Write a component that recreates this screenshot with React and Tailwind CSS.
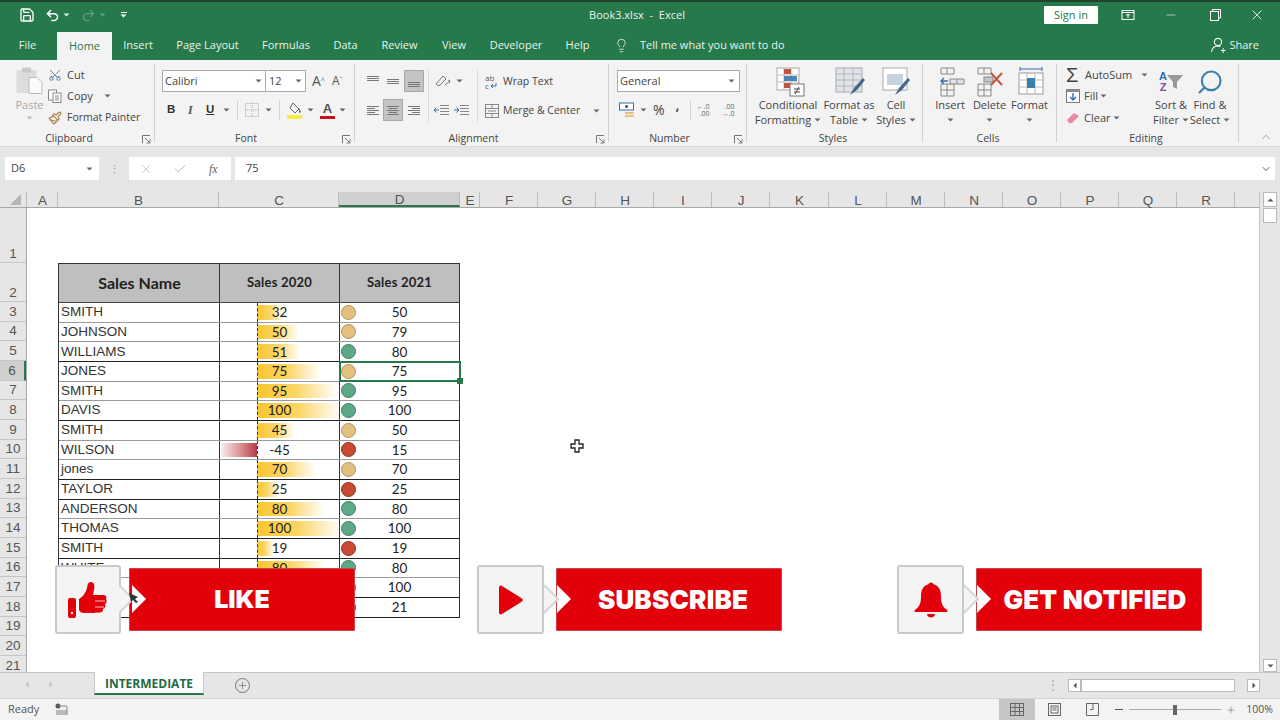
import React from 'react';
import { Save, Undo2, Redo2, Minus, X, Check, Lightbulb, Scissors, Paintbrush, Search, ChevronDown, ChevronUp, Plus } from 'lucide-react';

const ui = "font-['Open_Sans',sans-serif]";

const tabs = [
  { name: 'Insert', w: 'w-[28px]' },
  { name: 'Page Layout', w: 'w-[61px]' },
  { name: 'Formulas', w: 'w-[46px]' },
  { name: 'Data', w: 'w-[23px]' },
  { name: 'Review', w: 'w-[35px]' },
  { name: 'View', w: 'w-[24px]' },
  { name: 'Developer', w: 'w-[50px]' },
  { name: 'Help', w: 'w-[23px]' },
];

const columns = [
  { name: 'A', w: 'w-[31px]' },
  { name: 'B', w: 'w-[161px]' },
  { name: 'C', w: 'w-[120px]' },
  { name: 'D', w: 'w-[121px]', active: true },
  { name: 'E', w: 'w-[20px]' },
  { name: 'F', w: 'w-[58px]' },
  { name: 'G', w: 'w-[58px]' },
  { name: 'H', w: 'w-[58px]' },
  { name: 'I', w: 'w-[58px]' },
  { name: 'J', w: 'w-[58px]' },
  { name: 'K', w: 'w-[59px]' },
  { name: 'L', w: 'w-[58px]' },
  { name: 'M', w: 'w-[58px]' },
  { name: 'N', w: 'w-[58px]' },
  { name: 'O', w: 'w-[58px]' },
  { name: 'P', w: 'w-[58px]' },
  { name: 'Q', w: 'w-[58px]' },
  { name: 'R', w: 'w-[58px]' },
];

const amber = 'bg-[#e4c07f] border-[#b0935c]';
const green = 'bg-[#5da988] border-[#3c7d63]';
const red = 'bg-[#cb4a33] border-[#86301f]';

const rows = [
  { n: 3, name: 'SMITH', c: 32, d: 50, dot: amber, line: 'border-[#9a9a9a]' },
  { n: 4, name: 'JOHNSON', c: 50, d: 79, dot: amber, line: 'border-[#9a9a9a]' },
  { n: 5, name: 'WILLIAMS', c: 51, d: 80, dot: green, line: 'border-[#222]' },
  { n: 6, name: 'JONES', c: 75, d: 75, dot: amber, line: 'border-[#9a9a9a]', active: true },
  { n: 7, name: 'SMITH', c: 95, d: 95, dot: green, line: 'border-[#9a9a9a]' },
  { n: 8, name: 'DAVIS', c: 100, d: 100, dot: green, line: 'border-[#222]' },
  { n: 9, name: 'SMITH', c: 45, d: 50, dot: amber, line: 'border-[#9a9a9a]' },
  { n: 10, name: 'WILSON', c: -45, d: 15, dot: red, line: 'border-[#9a9a9a]' },
  { n: 11, name: 'jones', c: 70, d: 70, dot: amber, line: 'border-[#222]' },
  { n: 12, name: 'TAYLOR', c: 25, d: 25, dot: red, line: 'border-[#222]' },
  { n: 13, name: 'ANDERSON', c: 80, d: 80, dot: green, line: 'border-[#9a9a9a]' },
  { n: 14, name: 'THOMAS', c: 100, d: 100, dot: green, line: 'border-[#222]' },
  { n: 15, name: 'SMITH', c: 19, d: 19, dot: red, line: 'border-[#222]' },
  { n: 16, name: 'WHITE', c: 80, d: 80, dot: green, line: 'border-[#9a9a9a]' },
  { n: 17, name: 'MARTIN', c: 100, d: 100, dot: green, line: 'border-[#222]' },
  { n: 18, name: 'HARRIS', c: 21, d: 21, dot: red, line: 'border-[#222]' },
];

const Caret = ({ className = '' }) => (
  <svg width="7" height="4" viewBox="0 0 7 4" className={`shrink-0 ${className}`}><path d="M0.5 0.5h6L3.5 3.5z" fill="#666" /></svg>
);

const Launcher = () => (
  <svg width="9" height="9" viewBox="0 0 9 9" className="shrink-0" fill="none" stroke="#777" strokeWidth="1">
    <path d="M0.5 8V0.5H8M3 3l4.5 4.5M4.5 8H8V4.5" />
  </svg>
);

const Group = ({ w, label, launcher, children, labelClass = '' }) => (
  <div className={`${w} h-[78px] mt-[4px] border-r border-[#d0d0d0] flex flex-col shrink-0`}>
    <div className="h-[67px] shrink-0">{children}</div>
    <div className="flex items-center h-[16px] pr-[3px] shrink-0">
      <div className={`flex-1 text-center text-[10.5px] text-[#444] ${labelClass}`}>{label}</div>
      {launcher && <Launcher />}
    </div>
  </div>
);

const VDivider = ({ className = '' }) => <div className={`w-px h-[20px] bg-[#d4d4d4] shrink-0 ${className}`} />;

// three lines, used by all six alignment buttons
const AlignIcon = ({ lines, on }) => (
  <div className={`w-[20px] h-[22px] flex items-center justify-center shrink-0 ${on ? 'bg-[#c4c4c4] border border-[#a8a8a8]' : ''}`}>
    <svg width="14" height="14" viewBox="0 0 14 14" stroke="#777" strokeWidth="1">
      {lines.map((l, i) => <path key={i} d={`M${l[0]} ${l[2]}.5H${l[1]}`} />)}
    </svg>
  </div>
);

const GridIcon = ({ children }) => (
  <svg width="34" height="30" viewBox="0 0 34 30" fill="none">{children}</svg>
);

const BigButton = ({ w, icon, lines, caret = true }) => (
  <div className={`${w} flex flex-col items-center shrink-0`}>
    <div className="h-[29px] flex items-center justify-center">{icon}</div>
    <div className="text-[11px] leading-[15px] mt-[1px] text-[#444] text-center whitespace-nowrap">{lines[0]}</div>
    <div className="text-[11px] leading-[15px] text-[#444] flex items-center justify-center gap-[3px] h-[15px] whitespace-nowrap">
      {lines[1]}
      {caret && <Caret />}
    </div>
  </div>
);

const PromoBanner = ({ pos, boxW, gap, redPad, icon, text, textClass, arrowLeft, children }) => (
  <div className={`absolute z-20 ${pos} flex items-center h-[69px]`}>
    <div className={`${boxW} h-[69px] bg-[#f4f4f4] border-2 border-[#c9c9c9] rounded-[3px] flex items-center justify-center shrink-0`}>{icon}</div>
    <div className={`${gap} w-[226px] h-[63px] bg-[#e2000b] border border-[#c9444a] rounded-[1px] flex items-center justify-center shrink-0 ${redPad}`}>
      <span className={`font-['Inter',sans-serif] font-black text-white leading-none whitespace-nowrap ${textClass}`}>{text}</span>
    </div>
    <svg width="34" height="34" viewBox="0 0 34 34" className={`absolute top-[17px] ${arrowLeft}`}>
      <path d="M13 3L27 17L13 31z" fill="#fff" />
      <path d="M0 4L13 17L0 30z" fill="#f4f4f4" />
      <path d="M0 3L14 17L0 31" fill="none" stroke="#d6d6d6" strokeWidth="2" />
      {children}
    </svg>
  </div>
);

const DataBar = ({ value }) => {
  if (value < 0) {
    return (
      <div
        className="absolute left-[1px] top-[2px] bottom-[2px] bg-gradient-to-l from-[#b23a48] to-[#fbeff0]"
        style={{ width: Math.abs(value) * 0.8 }}
      />
    );
  }
  return (
    <div
      className="absolute left-[37px] top-[2px] bottom-[2px] bg-gradient-to-r from-[#fac52c] via-[#fbd562] to-[#fffdf4]"
      style={{ width: value * 0.82 }}
    />
  );
};

const App = () => {
  return (
    <div className={`relative w-[1280px] h-[720px] overflow-hidden flex flex-col bg-white ${ui}`}>
      {/* Title bar */}
      <div className="h-[2px] bg-[#20422f] shrink-0" />
      <div className="h-[28px] pb-[2px] bg-[#26794a] shrink-0 flex items-center text-white">
        <div className="w-[206px] flex items-center pl-[19px] shrink-0">
          <Save size={16} strokeWidth={2} />
          <Undo2 size={15} strokeWidth={2.4} className="ml-[10px]" />
          <svg width="7" height="4" viewBox="0 0 7 4" className="ml-[3px]"><path d="M0.5 0.5h6L3.5 3.5z" fill="#e5f0ea" /></svg>
          <Redo2 size={15} strokeWidth={2} className="ml-[11px] text-[#5f9f7c]" />
          <svg width="7" height="4" viewBox="0 0 7 4" className="ml-[3px]"><path d="M0.5 0.5h6L3.5 3.5z" fill="#5f9f7c" /></svg>
          <div className="ml-[14px] flex flex-col items-center gap-[1px]">
            <div className="w-[6px] h-px bg-white" />
            <svg width="7" height="4" viewBox="0 0 7 4"><path d="M0.5 0.5h6L3.5 3.5z" fill="#fff" /></svg>
          </div>
        </div>
        <div className="w-[862px] text-center text-[11px] text-[#eaf3ee] whitespace-pre">Book3.xlsx  -  Excel</div>
        <div className="w-[54px] h-[18px] ml-[-24px] bg-white rounded-[1px] text-[#26794a] text-[11px] flex items-center justify-center shrink-0">Sign in</div>
        <svg width="14" height="12" viewBox="0 0 14 12" fill="none" stroke="#fff" className="ml-[23px] shrink-0">
          <rect x="1" y="1.5" width="12" height="9" /><path d="M1 3.5h12M7 9V5M5.2 6.5L7 4.8l1.8 1.7" />
        </svg>
        <Minus size={14} strokeWidth={1} className="ml-[29px] shrink-0" />
        <svg width="11" height="12" viewBox="0 0 11 12" fill="none" stroke="#fff" className="ml-[32px] shrink-0">
          <rect x="0.5" y="2.5" width="8" height="9" /><path d="M2.5 2.5V0.5h8v8.5H8.5" />
        </svg>
        <X size={16} strokeWidth={1.3} className="ml-[28px] shrink-0" />
      </div>

      {/* Tabs */}
      <div className="h-[30px] bg-[#26794a] shrink-0 flex items-end text-[11px] text-[#e8f2ec]">
        <div className="w-[57px] h-[30px] flex items-center justify-center pr-[2px]">File</div>
        <div className="w-[55px] h-[28px] bg-[#f3f3f3] text-[#26794a] flex items-center justify-center">Home</div>
        <div className="flex items-center gap-[25px] h-[30px] ml-[12px]">
          {tabs.map((t) => (
            <div key={t.name} className={`${t.w} text-center whitespace-nowrap flex justify-center`}>{t.name}</div>
          ))}
        </div>
        <div className="h-[30px] flex items-center ml-[25px]">
          <Lightbulb size={15} strokeWidth={1.3} />
          <span className="ml-[11px] w-[140px] whitespace-nowrap">Tell me what you want to do</span>
        </div>
        <div className="h-[30px] flex items-center ml-auto mr-[21px] gap-[3px]">
          <svg width="16" height="16" viewBox="0 0 16 16" fill="none" stroke="#fff" strokeWidth="1.1">
            <circle cx="8" cy="5" r="3.6" /><path d="M1.5 15c.5-3.5 2.5-6 6.5-6 1 0 2 .2 2.6.6M11 13.5h4.500M13.200 11.200v4.600" />
          </svg>
          <span>Share</span>
        </div>
      </div>

      {/* Ribbon */}
      <div className="h-[87px] bg-[#f3f3f3] shrink-0 flex border-b border-[#d8d8d8] text-[#444]">
        <Group w="w-[155px]" label="Clipboard" launcher labelClass="pr-[4px]">
          <div className="flex h-full">
            <div className="w-[48px] pl-[11px] flex flex-col items-center shrink-0 text-[#a8a8a8] pt-[3px]">
              <svg width="28" height="28" viewBox="0 0 28 28">
                <rect x="0.5" y="3" width="20" height="23" rx="1" fill="#dcdcdc" />
                <rect x="6" y="0.5" width="9" height="5" fill="#c8c8c8" />
                <path d="M13 10.500h8l5 5v11H13z" fill="#fafafa" stroke="#bbb" />
              </svg>
              <div className="text-[11px] leading-[15px] mt-[2px]">Paste</div>
              <Caret className="mt-[4px] opacity-40" />
            </div>
            <div className="flex flex-col text-[11px]">
              <div className="h-[21.5px] flex items-center gap-[5px]"><Scissors size={14} strokeWidth={1.4} className="text-[#44678c] -rotate-90" /><span>Cut</span></div>
              <div className="h-[21.5px] flex items-center gap-[5px]">
                <svg width="14" height="14" viewBox="0 0 14 14" fill="#fff" stroke="#888"><rect x="0.5" y="1" width="8" height="10" /><rect x="5" y="4" width="8" height="9.500" /><path d="M7 7h4M7 9h4M7 11h4" /></svg>
                <span>Copy</span><Caret className="ml-[6px]" />
              </div>
              <div className="h-[21.5px] flex items-center gap-[5px]"><Paintbrush size={14} strokeWidth={2} className="text-[#a8824a]" /><span className="whitespace-nowrap text-[10.5px]">Format Painter</span></div>
            </div>
          </div>
        </Group>

        <Group w="w-[200px]" label="Font" launcher labelClass="pl-[1px] pr-[6px]">
          <div className="pl-[7px] pt-[6px]">
            <div className="flex items-center h-[22px]">
              <div className="w-[104px] h-[22px] bg-white border border-[#ababab] flex items-center justify-between pl-[2px] pr-[3px] text-[11px]"><span>Calibri</span><Caret /></div>
              <div className="w-[40px] h-[22px] bg-white border border-l-0 border-[#ababab] flex items-center justify-between pl-[3px] pr-[3px] text-[11px]"><span>12</span><Caret /></div>
              <span className="ml-[6px] text-[14px] leading-none text-[#555]">A<sup className="text-[7px] text-[#44678c]">^</sup></span>
              <span className="ml-[7px] text-[12px] leading-none text-[#555]">A<sup className="text-[7px] text-[#44678c]">ˇ</sup></span>
            </div>
            <div className="flex items-center h-[22px] mt-[7px] pl-[5px]">
              <span className="font-['Liberation_Sans',sans-serif] font-bold text-[11.5px] w-[12px] text-[#333]">B</span>
              <span className="font-['Liberation_Serif',serif] italic font-bold text-[12px] w-[12px] ml-[9px] text-[#555]">I</span>
              <span className="font-['Liberation_Sans',sans-serif] font-bold underline text-[11.5px] w-[10px] ml-[6px] text-[#333]">U</span>
              <Caret className="ml-[7px]" />
              <VDivider className="ml-[7px]" />
              <svg width="14" height="14" viewBox="0 0 14 14" fill="none" stroke="#aaa" strokeDasharray="1 1" className="ml-[7px]"><rect x="0.5" y="0.5" width="13" height="13" /><path d="M7 0v14M0 7h14" /></svg>
              <Caret className="ml-[6px]" />
              <VDivider className="ml-[7px]" />
              <svg width="16" height="17" viewBox="0 0 16 17" className="ml-[7px]"><path d="M6 1l6 6-4 4-5-5z" fill="#f5f5f5" stroke="#666" /><path d="M12 6l2 4-2 1z" fill="#666" /><rect x="0" y="13" width="15" height="4" fill="#f3ee3f" /></svg>
              <Caret className="ml-[4px]" />
              <div className="ml-[6px] w-[15px] h-[17px] flex flex-col items-center justify-end">
                <span className="font-['Liberation_Sans',sans-serif] text-[13px] leading-[12px] font-bold text-[#555]">A</span>
                <div className="w-[15px] h-[3px] mt-[1px] bg-[#c9101a]" />
              </div>
              <Caret className="ml-[4px]" />
            </div>
          </div>
        </Group>

        <Group w="w-[254px]" label="Alignment" launcher labelClass="pr-[4px]">
          <div className="flex pt-[6px] h-full">
            <div className="pl-[8px] w-[73px] shrink-0">
              <div className="flex h-[22px]">
                <AlignIcon lines={[[1, 13, 2], [1, 13, 4], [1, 13, 6]]} />
                <AlignIcon lines={[[1, 13, 5], [1, 13, 7], [1, 13, 9]]} />
                <div className="ml-[1px]"><AlignIcon on lines={[[1, 13, 8], [1, 13, 10], [1, 13, 12]]} /></div>
              </div>
              <div className="flex h-[22px] mt-[7px]">
                <AlignIcon lines={[[1, 13, 3], [1, 9, 5], [1, 13, 7], [1, 9, 9], [1, 13, 11]]} />
                <AlignIcon on lines={[[1, 13, 3], [3, 11, 5], [1, 13, 7], [3, 11, 9], [1, 13, 11]]} />
                <div className="ml-[1px]"><AlignIcon lines={[[1, 13, 3], [5, 13, 5], [1, 13, 7], [5, 13, 9], [1, 13, 11]]} /></div>
              </div>
            </div>
            <div className="w-[50px] border-x border-[#dcdcdc] h-[52px] shrink-0 pl-[5px]">
              <div className="flex items-center h-[22px] gap-[4px]">
                <svg width="18" height="14" viewBox="0 0 18 14" fill="none" stroke="#777"><path d="M2 10L9 2l3 3-7 7zM11 11l5-4M14 6l2 1-1 2" /></svg>
                <Caret />
              </div>
              <div className="flex items-center h-[22px] mt-[7px] gap-[5px]">
                <svg width="15" height="12" viewBox="0 0 15 12" fill="none" stroke="#888"><path d="M6 1.500h9M6 4.500h9M6 7.500h9M6 10.500h9" /><path d="M5 6H0M2.500 3.500L0 6l2.500 2.500" stroke="#2f6fb0" /></svg>
                <svg width="15" height="12" viewBox="0 0 15 12" fill="none" stroke="#888"><path d="M6 1.500h9M6 4.500h9M6 7.500h9M6 10.500h9" /><path d="M0 6h5M2.500 3.500L5 6 2.500 8.500" stroke="#2f6fb0" /></svg>
              </div>
            </div>
            <div className="pl-[7px] pt-px text-[11px] whitespace-nowrap">
              <div className="h-[22px] flex items-center gap-[4px]">
                <div className="w-[14px] flex flex-col shrink-0">
                  <span className="text-[8px] leading-[8px] text-[#555]">ab</span>
                  <div className="flex items-center gap-[1px]">
                    <span className="text-[8px] leading-[8px] text-[#555]">c</span>
                    <svg width="7" height="6" viewBox="0 0 7 6" fill="none" stroke="#2f6fb0"><path d="M6 0v3H1M3 1L1 3l2 2" /></svg>
                  </div>
                </div>
                <span className="text-[10.5px]">Wrap Text</span>
              </div>
              <div className="h-[22px] mt-[7px] flex items-center gap-[4px]">
                <svg width="14" height="14" viewBox="0 0 14 14" fill="none" stroke="#888"><rect x="0.5" y="0.5" width="13" height="13" /><path d="M0 4.500h14M0 9.500h14M3 7h8M7 0v4.500M7 9.500V14" /></svg>
                <span className="text-[10.5px]">Merge &amp; Center</span>
                <Caret className="ml-[9px]" />
              </div>
            </div>
          </div>
        </Group>

        <Group w="w-[138px]" label="Number" launcher labelClass="pr-[4px]">
          <div className="pl-[8px] pt-[6px]">
            <div className="w-[123px] h-[22px] bg-white border border-[#ababab] flex items-center justify-between pl-[2px] pr-[4px] text-[11px]"><span>General</span><Caret /></div>
            <div className="flex items-center h-[22px] mt-[7px] pl-[2px]">
              <svg width="16" height="16" viewBox="0 0 16 16"><rect x="0.5" y="1" width="14" height="7" fill="#fff" stroke="#2f6fb0" /><circle cx="7.500" cy="4.500" r="1.600" fill="#555" /><rect x="6" y="10" width="9" height="2" fill="#e6c17f" /><rect x="6" y="13" width="9" height="2" fill="#e6c17f" /></svg>
              <Caret className="ml-[5px]" />
              <span className="ml-[6px] text-[14px] leading-none">%</span>
              <span className="ml-[11px] text-[14px] leading-none font-bold text-[#555] -mt-[10px]">,</span>
              <VDivider className="ml-[10px]" />
              <span className="ml-[4px] text-[7px] leading-[7px] text-[#666] text-right w-[15px]">←.0<br />.00</span>
              <span className="ml-[10px] text-[7px] leading-[7px] text-[#666] text-right w-[15px]">.00<br />→.0</span>
            </div>
          </div>
        </Group>

        <Group w="w-[176px]" label="Styles">
          <div className="flex pt-[3px] pl-[2px]">
            <BigButton
              w="w-[78px]"
              lines={['Conditional', 'Formatting']}
              icon={
                <GridIcon>
                  <rect x="6" y="1" width="22" height="22" fill="#fff" stroke="#aaa" />
                  <path d="M6 8h22M6 15h22M13 1v22M20 1v22" stroke="#bbb" />
                  <rect x="13" y="2" width="7" height="5" fill="#c4553d" /><rect x="13" y="9" width="13" height="5" fill="#4d86b3" /><rect x="13" y="16" width="7" height="5" fill="#c4553d" />
                  <rect x="19" y="17" width="14" height="12" fill="#fff" stroke="#777" />
                  <path d="M23 22h6M23 25h6M28 20l-4 7" stroke="#444" />
                </GridIcon>
              }
            />
            <BigButton
              w="w-[44px]"
              lines={['Format as', 'Table']}
              icon={
                <GridIcon>
                  <rect x="4" y="1" width="26" height="24" fill="#dfe3ea" stroke="#aaa" />
                  <path d="M4 7h26M4 13h26M4 19h26M12 1v24M21 1v24" stroke="#b5b5b5" />
                  <path d="M18 28l4-7 9-10 2 2-8 10-7 5z" fill="#44678c" />
                </GridIcon>
              }
            />
            <BigButton
              w="w-[50px]"
              lines={['Cell', 'Styles']}
              icon={
                <GridIcon>
                  <rect x="4" y="1" width="24" height="22" fill="#fff" stroke="#aaa" />
                  <rect x="8" y="7" width="16" height="11" fill="#c5d3e0" />
                  <path d="M16 28l4-7 9-10 2 2-8 10-7 5z" fill="#44678c" />
                </GridIcon>
              }
            />
          </div>
        </Group>

        <Group w="w-[134px]" label="Cells">
          <div className="flex pt-[3px] pl-[7px]">
            <BigButton
              w="w-[40px]"
              lines={['Insert', '']}
              icon={
                <GridIcon>
                  <path d="M8 1h13v6H8zM14 1v6M8 17h13v12H8zM8 23h13M14 17v12" stroke="#888" />
                  <path d="M17 12h14v5H17zM24 12v5" stroke="#888" fill="#dfe3ea" />
                  <path d="M15 14H8M11 11l-3 3 3 3" stroke="#2f6fb0" strokeWidth="1.4" />
                </GridIcon>
              }
            />
            <BigButton
              w="w-[39px]"
              lines={['Delete', '']}
              icon={
                <GridIcon>
                  <path d="M5 1h13v6H5zM11 1v6M5 17h13v12H5zM5 23h13M11 17v12" stroke="#888" />
                  <rect x="11" y="10" width="9" height="5" fill="#bfc8d2" stroke="#888" />
                  <path d="M18 6l11 12M29 6L18 18" stroke="#c4553d" strokeWidth="2" />
                </GridIcon>
              }
            />
            <BigButton
              w="w-[41px]"
              lines={['Format', '']}
              icon={
                <GridIcon>
                  <rect x="6" y="6" width="24" height="21" fill="#fff" stroke="#999" />
                  <path d="M6 13h24M6 20h24M14 6v21M22 6v21" stroke="#bbb" />
                  <rect x="14" y="11" width="8" height="10" fill="#3b7fae" />
                  <path d="M7 2h22M7 0v4M29 0v4" stroke="#2f6fb0" />
                </GridIcon>
              }
            />
          </div>
        </Group>

        <Group w="w-[182px]" label="Editing">
          <div className="flex">
            <div className="pl-[9px] w-[94px] shrink-0 text-[11px] text-[#444]">
              <div className="h-[21.5px] flex items-center">
                <span className="w-[16px] text-[20px] leading-none font-['Liberation_Sans',sans-serif] text-[#444]">Σ</span>
                <span className="ml-[3px]">AutoSum</span>
                <Caret className="ml-[9px]" />
              </div>
              <div className="h-[21.5px] flex items-center">
                <svg width="14" height="14" viewBox="0 0 14 14" fill="none"><rect x="0.5" y="0.5" width="13" height="13" fill="#fff" stroke="#777" /><rect x="0" y="0" width="14" height="3" fill="#888" /><path d="M7 4v7M4 8l3 3 3-3" stroke="#2f6fb0" strokeWidth="1.4" /></svg>
                <span className="ml-[4px]">Fill</span>
                <Caret className="ml-[2px]" />
              </div>
              <div className="h-[21.5px] flex items-center">
                <svg width="14" height="12" viewBox="0 0 14 12"><path d="M1 8l7-7 5 3-7 7H3z" fill="#e68aa0" /></svg>
                <span className="ml-[4px]">Clear</span>
                <Caret className="ml-[2px]" />
              </div>
            </div>
            <div className="pt-[3px] flex">
              <BigButton
                w="w-[40px]"
                lines={['Sort &', 'Filter']}
                icon={
                  <div className="flex items-center">
                    <span className="font-['Liberation_Sans',sans-serif] font-bold text-[11px] leading-[11px] text-center"><span className="text-[#2f6fb0]">A</span><br /><span className="text-[#8a4aa8]">Z</span></span>
                    <svg width="16" height="14" viewBox="0 0 16 14" className="mt-[1px]"><path d="M0 0h16l-6 7v7l-4-2V7z" fill="#999" /></svg>
                  </div>
                }
              />
              <BigButton
                w="w-[38px]"
                lines={['Find &', 'Select']}
                icon={<Search size={28} strokeWidth={1.8} className="text-[#3b7fae] -scale-x-100" />}
              />
            </div>
          </div>
        </Group>

        <div className="flex-1 flex items-end justify-end pr-[7px] pb-[2px]">
          <ChevronUp size={14} strokeWidth={1} className="text-[#666]" />
        </div>
      </div>

      {/* Formula bar */}
      <div className="h-[45px] bg-[#e6e6e6] shrink-0 flex items-start pt-[10px] pl-[5px] pr-[5px]">
        <div className="w-[94px] h-[23px] bg-white flex items-center justify-between pl-[6px] pr-[6px] text-[11px] text-[#444] shrink-0"><span>D6</span><Caret /></div>
        <div className="w-[30px] h-[23px] flex items-center justify-center text-[#999] shrink-0 text-[11px] leading-none">⋮</div>
        <div className="w-[102px] h-[23px] bg-white flex items-center shrink-0">
          <X size={14} strokeWidth={1.2} className="ml-[10px] text-[#b5b5b5]" />
          <Check size={14} strokeWidth={1.6} className="ml-[20px] text-[#b5b5b5]" />
          <span className="ml-[22px] font-['Liberation_Serif',serif] italic text-[12px] text-[#666]">fx</span>
        </div>
        <div className="flex-1 h-[23px] ml-[4px] bg-white flex items-center justify-between pl-[11px] pr-[3px] text-[11px] text-[#444]">
          <span>75</span>
          <ChevronDown size={12} className="text-[#555]" />
        </div>
      </div>

      {/* Sheet */}
      <div className="flex flex-1 min-h-0 bg-white">
        <div className="w-[1260px] flex flex-col shrink-0 border-r border-[#c6c6c6]">
          {/* Column headers */}
          <div className="h-[16px] flex bg-[#e6e6e6] border-b border-[#a8a8a8] shrink-0 font-['Liberation_Sans',sans-serif] text-[13.5px] text-[#555]">
            <div className="w-[27px] h-full flex items-end justify-end pr-[5px] pb-[2px] border-r border-[#bdbdbd] shrink-0">
              <svg width="11" height="11" viewBox="0 0 11 11"><path d="M11 0v11H0z" fill="#b5b5b5" /></svg>
            </div>
            {columns.map((c) => (
              <div
                key={c.name}
                className={`${c.w} flex items-center justify-center pt-[3px] pl-px border-r border-[#bdbdbd] shrink-0 ${c.active ? 'bg-[#d0d0d0] border-b-2 border-b-[#26794a]' : ''}`}
              >
                {c.name}
              </div>
            ))}
          </div>

          <div className="flex flex-1 min-h-0">
            {/* Row headers */}
            <div className="w-[27px] bg-[#e6e6e6] border-r border-[#a8a8a8] shrink-0 font-['Liberation_Sans',sans-serif] text-[13.5px] text-[#555] flex flex-col overflow-hidden">
              <div className="h-[55px] border-b border-[#c6c6c6] flex items-end justify-center shrink-0 leading-[16px]">1</div>
              <div className="h-[39px] border-b border-[#c6c6c6] flex items-end justify-center shrink-0 leading-[16px]">2</div>
              {rows.map((r) => (
                <div key={r.n} className={`h-[19.67px] pt-px border-b border-[#c6c6c6] flex items-center justify-center shrink-0 ${r.active ? 'bg-[#d0d0d0] border-r-2 border-r-[#26794a]' : ''}`}>{r.n}</div>
              ))}
              {[19, 20, 21].map((n) => (
                <div key={n} className="h-[19.67px] pt-px border-b border-[#c6c6c6] flex items-center justify-center shrink-0">{n}</div>
              ))}
            </div>

            {/* Table */}
            <div className="flex-1 pl-[31px] pt-[55px]">
              <div className="w-[402px] border-l border-r border-t border-[#333]">
                <div className="h-[39px] flex bg-[#bfbfbf] border-b border-[#444] font-['Lato',sans-serif] font-bold text-[#222]">
                  <div className="w-[161px] border-r border-[#333] flex items-center justify-center text-[16px] pl-px">Sales Name</div>
                  <div className="w-[120px] border-r border-[#333] flex items-center justify-center text-[13px] tracking-[0.2px]">Sales 2020</div>
                  <div className="flex-1 flex items-center justify-center text-[13px] tracking-[0.2px]">Sales 2021</div>
                </div>
                {rows.map((r) => (
                  <div key={r.n} className={`h-[19.67px] flex border-b ${r.line} text-[#222]`}>
                    <div className="w-[161px] border-r border-[#333] pl-[2px] flex items-center font-['Liberation_Sans',sans-serif] text-[13.5px] text-[#333] shrink-0">{r.name}</div>
                    <div className="relative w-[120px] border-r border-[#333] flex items-center justify-center font-['Lato',sans-serif] text-[13.5px] shrink-0">
                      <DataBar value={r.c} />
                      <div className="absolute left-[37px] top-0 bottom-0 border-l border-dashed border-[#333]" />
                      <span className="relative">{r.c}</span>
                    </div>
                    <div className="relative flex-1 flex items-center pl-[1px] font-['Lato',sans-serif] text-[13.5px]">
                      <div className={`w-[15px] h-[15px] rounded-full border ${r.dot} shrink-0`} />
                      <span className="flex-1 text-center pr-[16px]">{r.d}</span>
                      {r.active && (
                        <div className="absolute z-10 -left-px -right-[2px] -top-[1px] -bottom-[1px] border-2 border-[#26794a]">
                          <div className="absolute -right-[4px] -bottom-[4px] w-[6px] h-[6px] bg-[#26794a]" />
                        </div>
                      )}
                    </div>
                  </div>
                ))}
              </div>
            </div>
          </div>
        </div>

        {/* Vertical scrollbar */}
        <div className="flex-1 bg-[#e6e6e6] flex flex-col items-center">
          <div className="w-[14px] h-[15px] bg-white border border-[#bbb] flex items-center justify-center">
            <svg width="7" height="4" viewBox="0 0 7 4"><path d="M0.5 3.500h6L3.500 0.5z" fill="#555" /></svg>
          </div>
          <div className="w-[14px] h-[15px] mt-px bg-white border border-[#bbb]" />
          <div className="flex-1" />
          <div className="w-[14px] h-[13px] bg-white border border-[#bbb] flex items-center justify-center">
            <svg width="7" height="4" viewBox="0 0 7 4"><path d="M0.5 0.5h6L3.5 3.5z" fill="#555" /></svg>
          </div>
        </div>
      </div>

      {/* Sheet tabs */}
      <div className="h-[26px] bg-[#e6e6e6] border-t border-[#c6c6c6] shrink-0 flex items-start">
        <div className="w-[94px] h-[22px] flex items-center pl-[25px] gap-[20px] shrink-0">
          <svg width="4" height="7" viewBox="0 0 4 7"><path d="M3.5 0.5v6L0.5 3.5z" fill="#c0c0c0" /></svg>
          <svg width="4" height="7" viewBox="0 0 4 7"><path d="M0.5 0.5v6L3.5 3.5z" fill="#c0c0c0" /></svg>
        </div>
        <div className="w-[110px] h-[23px] -mt-px pt-[2px] bg-white border-x border-[#c6c6c6] border-b-2 border-b-[#26794a] flex items-center justify-center text-[12px] font-bold text-[#1f6b41] shrink-0 whitespace-nowrap">INTERMEDIATE</div>
        <div className="ml-[31px] mt-[5px] w-[15px] h-[15px] rounded-full border border-[#777] flex items-center justify-center shrink-0">
          <Plus size={11} strokeWidth={1.4} className="text-[#666]" />
        </div>
        <div className="ml-[797px] mt-[5px] text-[#aaa] text-[12px] leading-[14px] shrink-0">⋮</div>
        <div className="ml-[9px] mt-[6px] flex h-[13px] w-[192px] shrink-0">
          <div className="w-[13px] h-[13px] bg-white border border-[#bbb] flex items-center justify-center"><svg width="4" height="7" viewBox="0 0 4 7"><path d="M3.5 0.5v6L0.5 3.5z" fill="#555" /></svg></div>
          <div className="w-[154px] h-[13px] bg-white border border-[#bbb]" />
          <div className="flex-1" />
          <div className="w-[13px] h-[13px] bg-white border border-[#bbb] flex items-center justify-center"><svg width="4" height="7" viewBox="0 0 4 7"><path d="M0.5 0.5v6L3.5 3.5z" fill="#555" /></svg></div>
        </div>
      </div>

      {/* Status bar */}
      <div className="h-[22px] bg-[#f3f3f3] border-t border-[#d4d4d4] shrink-0 flex items-center text-[11px] text-[#555]">
        <span className="ml-[8px]">Ready</span>
        <svg width="13" height="13" viewBox="0 0 13 13" className="ml-[16px]"><circle cx="3" cy="3" r="2.5" fill="#555" /><path d="M1 7h11v5H1z" fill="#bbb" /><path d="M3 3h9v9" fill="none" stroke="#888" /></svg>
        <div className="ml-[931px] w-[36px] h-[21px] bg-[#c6c6c6] flex items-center justify-center shrink-0">
          <svg width="14" height="13" viewBox="0 0 14 13" fill="none" stroke="#666"><rect x="0.5" y="0.5" width="13" height="12" /><path d="M0 4.500h14M0 8.500h14M5 0v13M9.500 0v13" /></svg>
        </div>
        <svg width="13" height="13" viewBox="0 0 13 13" fill="none" stroke="#666" className="ml-[13px] shrink-0"><rect x="0.5" y="0.5" width="12" height="12" /><rect x="3" y="3" width="7" height="7" /><path d="M4.500 5h4M4.500 7h4" /></svg>
        <svg width="13" height="13" viewBox="0 0 13 13" fill="none" stroke="#666" className="ml-[25px] shrink-0"><path d="M0.5 0.5h12v12H0.5zM7 0.5v6H4" /></svg>
        <span className="ml-[16px] w-[8px] h-px bg-[#555] shrink-0" />
        <div className="ml-[6px] w-[92px] h-px bg-[#aaa] shrink-0 flex items-center justify-center">
          <div className="w-[4px] h-[10px] bg-[#666] shrink-0" />
        </div>
        <Plus size={10} strokeWidth={1.2} className="ml-[5px] shrink-0" />
        <span className="ml-[10px] whitespace-nowrap text-[10.5px]">100%</span>
      </div>

      {/* Video overlay buttons */}
      <PromoBanner
        pos="left-[55px] top-[565px]"
        boxW="w-[66px]"
        gap="ml-[8px]"
        redPad=""
        text="LIKE"
        textClass="text-[25px]"
        arrowLeft="left-[64px]"
        icon={
          <svg width="40" height="38" viewBox="0 0 40 38" fill="#e2000b">
            <rect x="0" y="17" width="8" height="20" rx="2" />
            <path d="M11 18c4-2 7-7 8-11 .5-3 1-6 4-6 3.500 0 4 4 3 8l-1 5h10c3 0 4 2 3 4 1 1 1 4-1 5 1 2 0 4-2 5 0 2-1 4-4 4H17c-3 0-6-1-6-4z" />
            <path d="M27 20h10M27 26h9M27 32h7" stroke="#f4f4f4" strokeWidth="0.8" />
            <circle cx="4" cy="32" r="1.200" fill="#f4f4f4" />
          </svg>
        }
      >
        <path d="M10 11l9 4 -3 2 3 3-2 1-3-3-2 2z" fill="#333" />
      </PromoBanner>
      <PromoBanner
        pos="left-[477px] top-[565px]"
        boxW="w-[67px]"
        gap="ml-[12px]"
        redPad="pl-[8px]"
        text="SUBSCRIBE"
        textClass="text-[26px] tracking-[0.2px]"
        arrowLeft="left-[67px]"
        icon={
          <svg width="26" height="30" viewBox="0 0 26 30"><path d="M1 2.500C1 1 2.500 0 4 1l20 12.500c1 .7 1 2.300 0 3L4 29c-1.500 1-3 0-3-1.500z" fill="#e2000b" /></svg>
        }
      />
      <PromoBanner
        pos="left-[897px] top-[565px]"
        boxW="w-[67px]"
        gap="ml-[12px]"
        redPad="pl-[12px]"
        text="GET NOTIFIED"
        textClass="text-[26px] tracking-[0.2px]"
        arrowLeft="left-[67px]"
        icon={
          <svg width="34" height="36" viewBox="0 0 34 36" fill="#e2000b">
            <circle cx="17" cy="3" r="2.500" />
            <path d="M17 2c7 0 10 5 10 12 0 8 2 11 5 13 2 1 2 3 0 3H2c-2 0-2-2 0-3 3-2 5-5 5-13C7 7 10 2 17 2z" />
            <path d="M13 32h8c0 2-2 3.500-4 3.500S13 34 13 32z" />
          </svg>
        }
      />

      {/* Mouse cursor */}
      <svg width="14" height="14" viewBox="0 0 14 14" className="absolute left-[570px] top-[439px]">
        <path d="M5 1h4v4h4v4H9v4H5V9H1V5h4z" fill="#fff" stroke="#222" strokeWidth="1.300" />
      </svg>
    </div>
  );
};

export default App;
